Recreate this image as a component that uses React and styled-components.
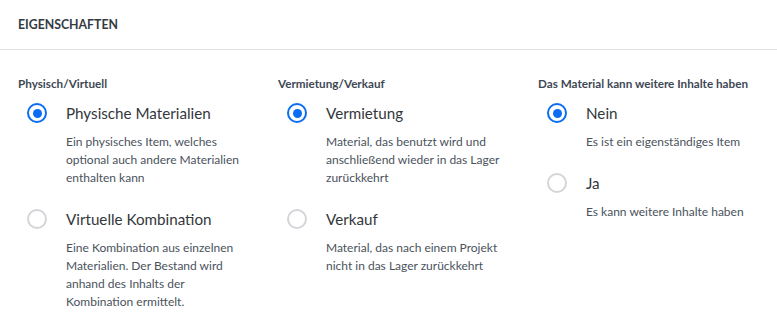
import React from "react";
import styled, { createGlobalStyle } from "styled-components";

const Global = createGlobalStyle`
  html, body { margin: 0; padding: 0; background: #ffffff; }
  body { font-family: "Lato", "Open Sans", sans-serif; -webkit-font-smoothing: antialiased; }
`;

const Page = styled.div`
  width: 777px;
  height: 320px;
  background: #fff;
  overflow: hidden;
`;

const Header = styled.div`
  height: 50px;
  box-sizing: border-box;
  padding: 0 18px;
  display: flex;
  align-items: center;
  border-bottom: 1px solid #e2e3e5;
  font-size: 12.3px;
  font-weight: 700;
  color: #333a42;
`;

const Columns = styled.div`
  display: grid;
  grid-template-columns: 260px 260px 241px;
  padding: 25px 0 0 18px;
`;

const Column = styled.div`
  display: flex;
  flex-direction: column;
`;

const Title = styled.div`
  font-size: 11.7px;
  line-height: 16px;
  font-weight: 700;
  color: #3e4854;
  margin-bottom: 10px;
`;

const Option = styled.div`
  display: grid;
  grid-template-columns: 48px 1fr;
  & + & { margin-top: 20px; }
`;

const Radio = styled.span`
  box-sizing: border-box;
  width: 20px;
  height: 20px;
  margin: 2px 0 0 9px;
  border-radius: 50%;
  border: ${(p) => (p.$checked ? "2.5px solid #0b6cf3" : "2px solid #d3d5d8")};
  display: flex;
  align-items: center;
  justify-content: center;
  &::after {
    content: "";
    display: ${(p) => (p.$checked ? "block" : "none")};
    width: 9px;
    height: 9px;
    border-radius: 50%;
    background: #0b6cf3;
  }
`;

const Body = styled.div`
  display: flex;
  flex-direction: column;
`;

const Label = styled.div`
  font-size: 15.2px;
  line-height: 24px;
  color: #33373c;
`;

const Desc = styled.div`
  margin-top: 8px;
  font-size: 12px;
  line-height: 18px;
  color: #4a525c;
  white-space: nowrap;
`;

const groups = [
  {
    title: "Physisch/Virtuell",
    options: [
      { label: "Physische Materialien", desc: ["Ein physisches Item, welches", "optional auch andere Materialien", "enthalten kann"], checked: true },
      { label: "Virtuelle Kombination", desc: ["Eine Kombination aus einzelnen", "Materialien. Der Bestand wird", "anhand des Inhalts der", "Kombination ermittelt."], checked: false },
    ],
  },
  {
    title: "Vermietung/Verkauf",
    options: [
      { label: "Vermietung", desc: ["Material, das benutzt wird und", "anschließend wieder in das Lager", "zurückkehrt"], checked: true },
      { label: "Verkauf", desc: ["Material, das nach einem Projekt", "nicht in das Lager zurückkehrt"], checked: false },
    ],
  },
  {
    title: "Das Material kann weitere Inhalte haben",
    options: [
      { label: "Nein", desc: ["Es ist ein eigenständiges Item"], checked: true },
      { label: "Ja", desc: ["Es kann weitere Inhalte haben"], checked: false },
    ],
  },
];

export default function App() {
  return (
    <Page>
      <Global />
      <Header>EIGENSCHAFTEN</Header>
      <Columns>
        {groups.map((g) => (
          <Column key={g.title}>
            <Title>{g.title}</Title>
            {g.options.map((o) => (
              <Option key={o.label}>
                <Radio $checked={o.checked} />
                <Body>
                  <Label>{o.label}</Label>
                  <Desc>
                    {o.desc.map((line, i) => (
                      <React.Fragment key={i}>
                        {i > 0 && <br />}
                        {line}
                      </React.Fragment>
                    ))}
                  </Desc>
                </Body>
              </Option>
            ))}
          </Column>
        ))}
      </Columns>
    </Page>
  );
}
